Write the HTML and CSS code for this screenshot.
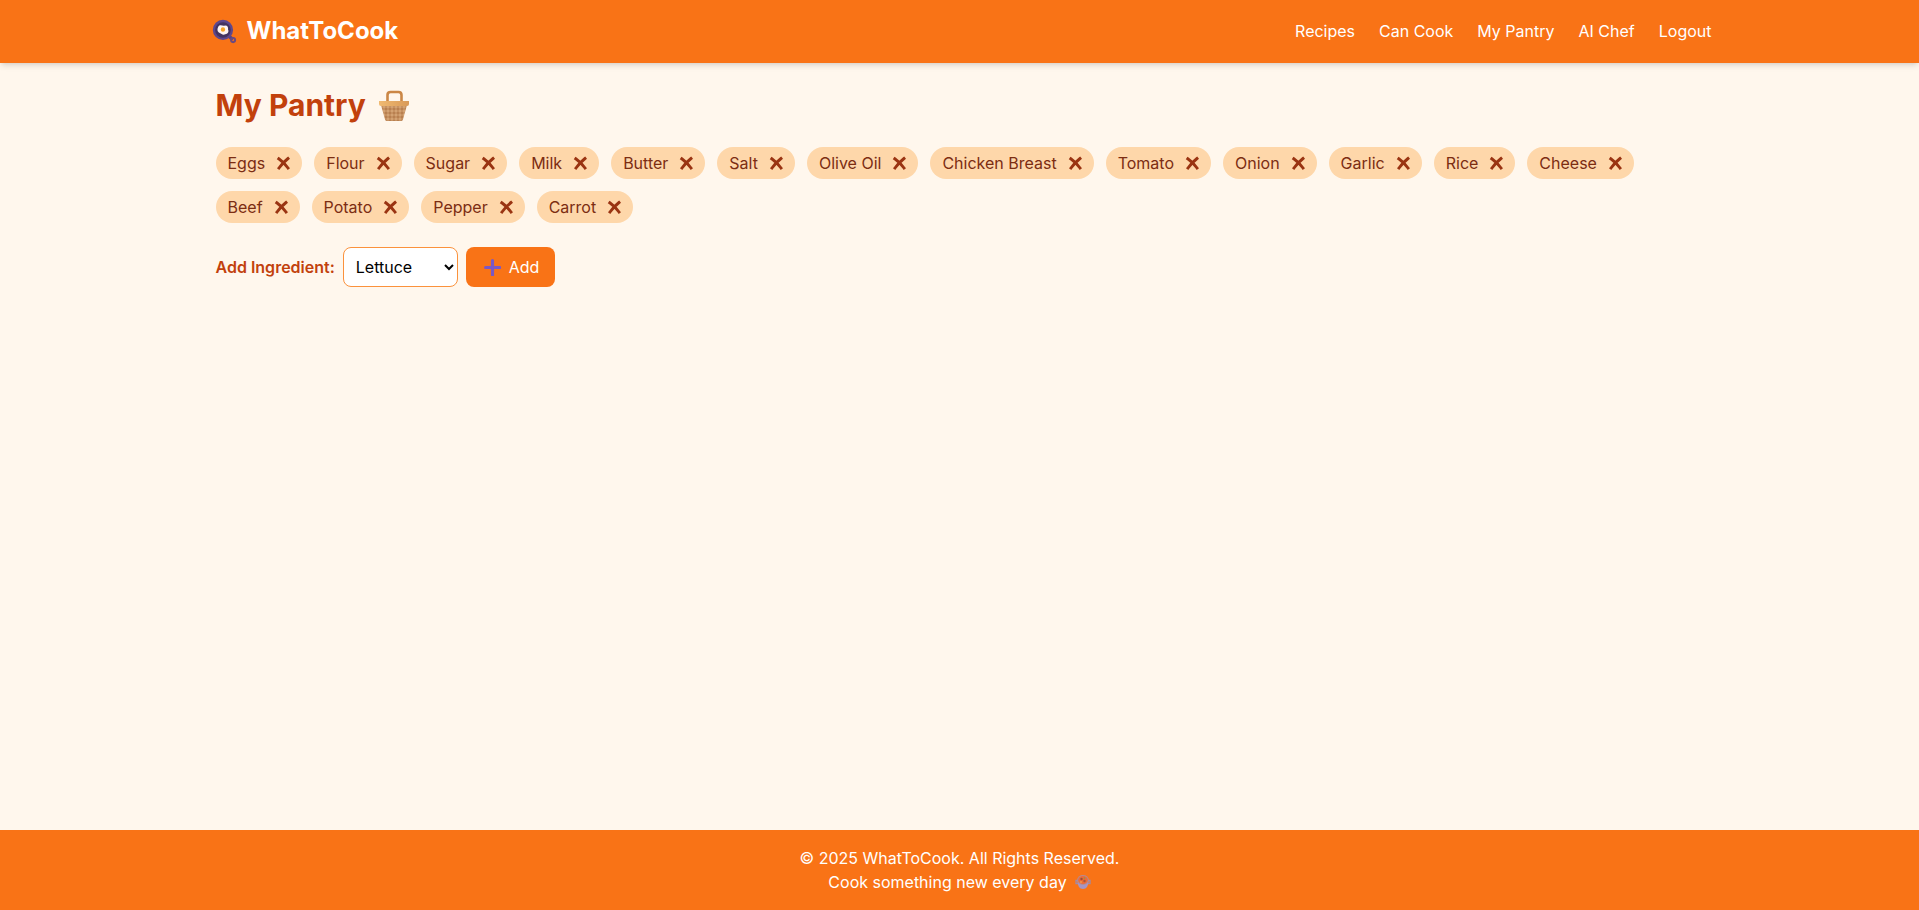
FILE: index.html
```
<!DOCTYPE html>
<html lang="en">
<head>
<meta charset="utf-8">
<meta name="viewport" content="width=device-width, initial-scale=1">
<title>WhatToCook</title>
<link rel="stylesheet" href="styles.css">
</head>
<body>
<svg class="sprite" aria-hidden="true">
  <symbol id="cross" viewBox="0 0 17 18"><path d="M5.800 4.800Q11 8.500 15 14M15 4.500Q10 8.500 6 14" fill="none" stroke="currentColor" stroke-width="2.900" stroke-linecap="square"/></symbol>
</svg>
<header class="header">
  <div class="bar">
    <a class="logo" href="#">
      <svg class="pan" viewBox="0 0 32 32" aria-hidden="true">
        <path d="M21 21l4 4" stroke="#5b4380" stroke-width="4.500" stroke-linecap="round"/>
        <circle cx="27" cy="27" r="2.600" fill="none" stroke="#6b4a80" stroke-width="2.600"/>
        <circle cx="14" cy="14" r="13" fill="#5f478c"/>
        <circle cx="14" cy="14" r="10" fill="#44335f"/>
        <path d="M8 10c2-3.500 5-1 8-1.500 4-.5 5 2.500 4.500 5 1.500 3-.5 6-3.500 6-3 1.500-5-.5-7-1.500-3.500-1.500-3.500-5-2-8z" fill="#fff5f2"/>
        <circle cx="14" cy="13.500" r="2.800" fill="#f9a527"/>
      </svg>
      <span>WhatToCook</span>
    </a>
    <nav class="nav">
      <a href="#">Recipes</a>
      <a href="#">Can Cook</a>
      <a href="#">My Pantry</a>
      <a href="#">AI Chef</a>
      <a href="#">Logout</a>
    </nav>
  </div>
</header>
<main class="main">
  <h1 class="title">My Pantry
    <svg class="basket" viewBox="0 0 32 32" aria-hidden="true">
      <defs>
        <linearGradient id="rim"><stop offset="0" stop-color="#f0ba72"/><stop offset="1" stop-color="#d99a58"/></linearGradient>
        <pattern id="weave" width="4" height="4" patternUnits="userSpaceOnUse"><path d="M0 0h4v4H0z" fill="#b98050"/><path d="M0 2L2 0l2 2-2 2z" fill="#d4a272"/></pattern>
      </defs>
      <path d="M9.500 14V6q0-3 3-3h8q3 0 3 3v8" fill="none" stroke="#cb8746" stroke-width="2.600"/>
      <path d="M3 16h26l-4 14.500q-.5 1.500-2 1.500H9q-1.500 0-2-1.500z" fill="url(#weave)"/>
      <path d="M1 12h30v3q0 2-2 2H3q-2 0-2-2z" fill="url(#rim)"/>
    </svg>
  </h1>
  <ul class="chips">
    <li class="chip">Eggs<button type="button" aria-label="Remove Eggs"><svg><use href="#cross"/></svg></button></li>
    <li class="chip">Flour<button type="button" aria-label="Remove Flour"><svg><use href="#cross"/></svg></button></li>
    <li class="chip">Sugar<button type="button" aria-label="Remove Sugar"><svg><use href="#cross"/></svg></button></li>
    <li class="chip">Milk<button type="button" aria-label="Remove Milk"><svg><use href="#cross"/></svg></button></li>
    <li class="chip">Butter<button type="button" aria-label="Remove Butter"><svg><use href="#cross"/></svg></button></li>
    <li class="chip">Salt<button type="button" aria-label="Remove Salt"><svg><use href="#cross"/></svg></button></li>
    <li class="chip">Olive Oil<button type="button" aria-label="Remove Olive Oil"><svg><use href="#cross"/></svg></button></li>
    <li class="chip">Chicken Breast<button type="button" aria-label="Remove Chicken Breast"><svg><use href="#cross"/></svg></button></li>
    <li class="chip">Tomato<button type="button" aria-label="Remove Tomato"><svg><use href="#cross"/></svg></button></li>
    <li class="chip">Onion<button type="button" aria-label="Remove Onion"><svg><use href="#cross"/></svg></button></li>
    <li class="chip">Garlic<button type="button" aria-label="Remove Garlic"><svg><use href="#cross"/></svg></button></li>
    <li class="chip">Rice<button type="button" aria-label="Remove Rice"><svg><use href="#cross"/></svg></button></li>
    <li class="chip">Cheese<button type="button" aria-label="Remove Cheese"><svg><use href="#cross"/></svg></button></li>
    <li class="chip">Beef<button type="button" aria-label="Remove Beef"><svg><use href="#cross"/></svg></button></li>
    <li class="chip">Potato<button type="button" aria-label="Remove Potato"><svg><use href="#cross"/></svg></button></li>
    <li class="chip">Pepper<button type="button" aria-label="Remove Pepper"><svg><use href="#cross"/></svg></button></li>
    <li class="chip">Carrot<button type="button" aria-label="Remove Carrot"><svg><use href="#cross"/></svg></button></li>
  </ul>
  <form class="add">
    <label for="ingredient">Add Ingredient:</label>
    <select id="ingredient"><option>Lettuce</option></select>
    <button type="button" class="add-btn">
      <svg class="plus" viewBox="0 0 16 16" aria-hidden="true"><path d="M8 1.500v13.500M1.500 8h13.500" stroke="#7a58c4" stroke-width="3" stroke-linecap="round"/></svg>
      Add
    </button>
  </form>
</main>
<footer class="footer">
  <p>© 2025 WhatToCook. All Rights Reserved.</p>
  <p>Cook something new every day
    <svg class="pot" viewBox="0 0 16 16" aria-hidden="true">
      <path d="M3 6.500H1v3h3M13 6.500h2v3h-3" fill="none" stroke="#a08aa8" stroke-width="1.300"/>
      <path d="M2.500 6.500h11q0 8.500-5.500 8.500T2.500 6.500z" fill="#a695c4"/>
      <ellipse cx="8" cy="6" rx="5.800" ry="5" fill="#b58a92"/>
      <ellipse cx="8" cy="6" rx="4.800" ry="4" fill="#ee6b38"/>
      <circle cx="6.500" cy="5" r="1.200" fill="#994f38"/><circle cx="9.500" cy="7" r="1.200" fill="#a6573a"/>
      <circle cx="9.500" cy="4" r=".8" fill="#72a550"/><circle cx="6" cy="8" r=".8" fill="#f3b65a"/>
    </svg>
  </p>
</footer>
</body>
</html>
```
FILE: styles.css
```
* { box-sizing: border-box; }
body {
  margin: 0;
  min-height: 100vh;
  display: flex;
  flex-direction: column;
  background: #fff7ed;
  font-family: Inter, "Liberation Sans", sans-serif;
  font-size: 16px;
  line-height: 24px;
}
button, select { font: inherit; }
a { color: inherit; text-decoration: none; }
.sprite { display: none; }
.header {
  background: #f97316;
  color: #fff;
  box-shadow: 0 4px 6px -1px rgba(0, 0, 0, .1), 0 2px 4px -2px rgba(0, 0, 0, .1);
}
.bar {
  max-width: 1536px;
  margin: 0 auto;
  padding: 15px 16px 16px;
  display: flex;
  justify-content: space-between;
  align-items: center;
}
.logo {
  display: flex;
  align-items: center;
  gap: 10px;
  padding-left: 4px;
  font-size: 24px;
  line-height: 32px;
  font-weight: 700;
}
.pan { width: 25px; height: 25px; }
.nav { display: flex; gap: 24px; }
.main {
  flex: 1;
  width: 100%;
  max-width: 1536px;
  margin: 0 auto;
  padding: 24px;
}
.title {
  display: flex;
  align-items: center;
  gap: 12px;
  margin: 0 0 24px;
  color: #c2410c;
  font-size: 30px;
  line-height: 36px;
  font-weight: 700;
}
.basket { width: 32px; height: 32px; }
.chips {
  display: flex;
  flex-wrap: wrap;
  gap: 12px;
  margin: 0 0 24px;
  padding: 0;
  list-style: none;
}
.chip {
  display: flex;
  align-items: center;
  gap: 8px;
  padding: 4px 12px;
  border-radius: 16px;
  background: #fed7aa;
  color: #7c2d12;
}
.chip button {
  display: flex;
  padding: 0;
  border: 0;
  background: none;
  color: #9a3412;
  cursor: pointer;
}
.chip svg { width: 17px; height: 18px; }
.add { display: flex; align-items: center; gap: 8px; }
.add label { color: #c2410c; font-weight: 600; }
.add select {
  height: 40px;
  width: 115px;
  padding: 0 8px;
  border: 1px solid #fb923c;
  border-radius: 8px;
  background: #fff;
  color: #000;
}
.add-btn {
  display: flex;
  align-items: center;
  gap: 8px;
  padding: 8px 16px 8px 18px;
  border: 0;
  border-radius: 8px;
  background: #f97316;
  color: #fff;
  cursor: pointer;
}
.plus { width: 17px; height: 17px; }
.footer {
  padding: 16px;
  background: #f97316;
  color: #fff;
  text-align: center;
}
.footer p {
  display: flex;
  justify-content: center;
  align-items: center;
  gap: 8px;
  margin: 0;
}
.pot { width: 16px; height: 16px; }
```
